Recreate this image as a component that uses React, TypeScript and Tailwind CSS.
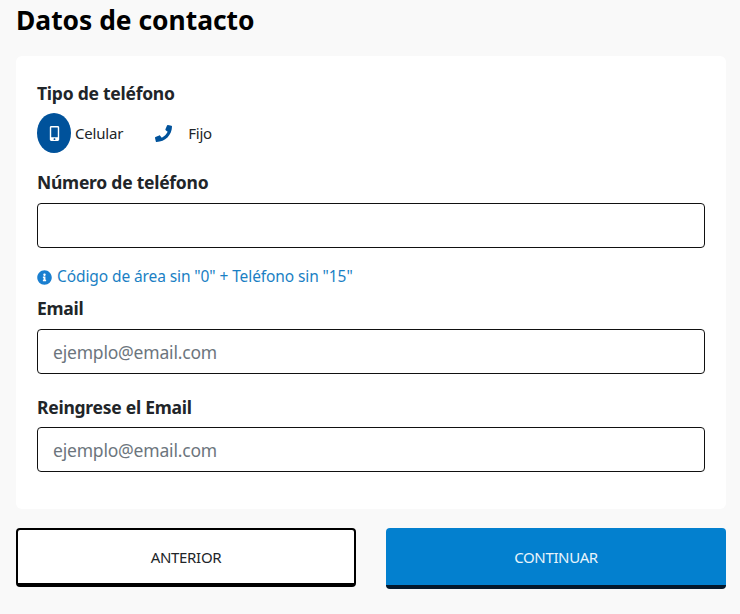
import React from "react";

const font = { fontFamily: '"Noto Sans", "Open Sans", sans-serif' };

const PhoneIcon = () => (
  <svg viewBox="0 0 512 512" className="w-[17px] h-[17px] fill-[#00529b]">
    <path d="M493.4 24.6l-104-24c-11.3-2.6-22.9 3.3-27.5 13.9l-48 112c-4.2 9.8-1.4 21.3 6.9 28l60.6 49.6c-36 76.7-98.9 140.5-177.2 177.2l-49.6-60.6c-6.8-8.3-18.2-11.1-28-6.9l-112 48C3.9 366.5-2 378.1.6 389.4l24 104C27.1 504.2 36.7 512 48 512c256.1 0 464-207.5 464-464 0-11.2-7.7-20.9-18.6-23.4z" />
  </svg>
);

const MobileIcon = () => (
  <svg viewBox="0 0 320 512" className="w-[11px] h-[15px] fill-white">
    <path d="M272 0H48C21.5 0 0 21.5 0 48v416c0 26.5 21.5 48 48 48h224c26.5 0 48-21.5 48-48V48c0-26.5-21.5-48-48-48zM160 480c-17.7 0-32-14.3-32-32s14.3-32 32-32 32 14.3 32 32-14.3 32-32 32zm112-108c0 6.6-5.4 12-12 12H60c-6.6 0-12-5.4-12-12V60c0-6.6 5.4-12 12-12h200c6.6 0 12 5.4 12 12v312z" />
  </svg>
);

const InfoIcon = () => (
  <svg viewBox="0 0 512 512" className="w-[15px] h-[15px] fill-[#1a7fd0]">
    <path d="M256 8C119 8 8 119 8 256s111 248 248 248 248-111 248-248S393 8 256 8zm0 110c23.2 0 42 18.8 42 42s-18.800 42-42 42-42-18.800-42-42 18.800-42 42-42zm56 254c0 6.600-5.400 12-12 12h-88c-6.600 0-12-5.400-12-12v-24c0-6.600 5.400-12 12-12h12v-64h-12c-6.600 0-12-5.400-12-12v-24c0-6.600 5.400-12 12-12h64c6.600 0 12 5.400 12 12v100h12c6.600 0 12 5.400 12 12v24z" />
  </svg>
);

const Field = ({ placeholder }: { placeholder?: string }) => (
  <input
    type="text"
    placeholder={placeholder}
    style={font}
    className="block w-full h-[45px] bg-white border border-[#111] rounded-[4px] px-[15px] text-[17.5px] tracking-[-0.2px] placeholder:text-[#6c757d] outline-none"
  />
);

export default function App() {
  return (
    <div style={font} className="w-[740px] h-[614px] bg-[#f9f9f9] pl-4 overflow-hidden">
      <div className="w-[710px]">
        <h1 className="h-[56px] pb-[14px] flex items-center text-[26.4px] font-bold text-black">
          Datos de contacto
        </h1>

        <div className="bg-white rounded-[6px] h-[453px] px-[21px] pt-[25px]">
          <p className="text-[17.5px] leading-[24px] font-bold text-[#212529] tracking-[-0.25px]">Tipo de teléfono</p>

          <div className="flex items-center h-[40px] mt-[8px]">
            <div className="w-[34px] h-[40px] rounded-[50%] bg-[#00529b] flex items-center justify-center">
              <MobileIcon />
            </div>
            <span className="ml-[4px] text-[15px] text-[#212529] tracking-[-0.2px]">Celular</span>
            <div className="ml-[31px] pl-px">
              <PhoneIcon />
            </div>
            <span className="ml-[16px] text-[15px] text-[#212529] tracking-[-0.2px]">Fijo</span>
          </div>

          <p className="mt-[17px] mb-[9px] text-[17.5px] leading-[24px] font-bold text-[#212529] tracking-[-0.25px]">Número de teléfono</p>
          <Field />

          <div className="flex items-center gap-[5px] mt-[18px] h-[22px]">
            <InfoIcon />
            <span className="text-[15.5px] text-[#1a7fc4] tracking-[-0.1px]">Código de área sin "0" + Teléfono sin "15"</span>
          </div>

          <p className="mt-[8px] mb-[9px] text-[17.5px] leading-[24px] font-bold text-[#212529] tracking-[-0.25px]">Email</p>
          <Field placeholder="ejemplo@email.com" />

          <p className="mt-[21px] mb-[8px] text-[17.5px] leading-[24px] font-bold text-[#212529] tracking-[-0.25px]">Reingrese el Email</p>
          <Field placeholder="ejemplo@email.com" />
        </div>

        <div className="flex justify-between mt-[19px]">
          <button style={font} className="w-[340px] h-[59px] pt-[2px] bg-white border-2 border-b-[4px] border-black rounded-[4px] text-[15px] text-[#212529] tracking-[-0.3px]">
            ANTERIOR
          </button>
          <button style={font} className="w-[340px] h-[61px] pt-[2px] bg-[#0380cf] border-b-[4px] border-[#04182b] rounded-[4px] text-[15px] text-[#e8f4fb] tracking-[-0.35px]">
            CONTINUAR
          </button>
        </div>
      </div>
    </div>
  );
}
